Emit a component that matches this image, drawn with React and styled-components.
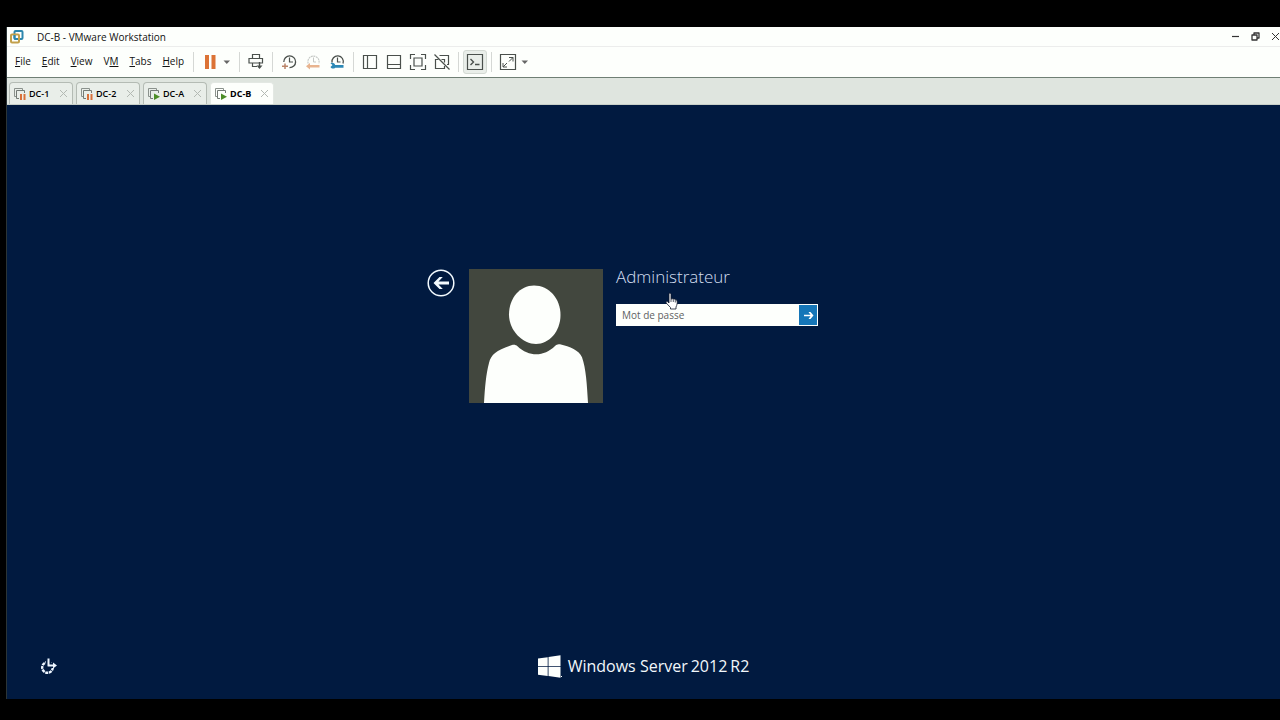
import React from "react";
import styled, { createGlobalStyle, css } from "styled-components";

const GlobalStyle = createGlobalStyle`
  *, *::before, *::after { box-sizing: border-box; }
  html, body { margin: 0; background: #000; }
  body, button, input { font-family: "Open Sans", "Noto Sans", sans-serif; }
  button { border: 0; padding: 0; background: none; color: inherit; cursor: pointer; }
  svg { display: block; flex: none; }
`;

const Desktop = styled.div`
  display: flex;
  min-height: 100vh;
  padding: 27px 0 21px 6px;
  overflow: hidden;
`;

const Window = styled.div`
  display: flex;
  flex-direction: column;
  flex: 1;
  min-width: 0;
  border-left: 1px solid #2b3436;
`;

const TitleBar = styled.header`
  display: flex;
  align-items: center;
  height: 20px;
  padding-left: 2px;
  background: #fdfffc;
  border-bottom: 1px solid #ecedec;
  overflow: hidden;
`;

const Title = styled.h1`
  flex: 1;
  margin: 0 0 0 13px;
  color: #111;
  font-size: 10px;
  font-weight: 400;
  line-height: 18px;
`;

const WindowButton = styled.button`
  display: flex;
  align-items: center;
  justify-content: flex-end;
  flex: none;
  width: 20px;
  height: 18px;
  color: #333;
`;

const Toolbar = styled.div`
  display: flex;
  align-items: center;
  height: 31px;
  background: #fdfffc;
  border-bottom: 1px solid #6f7f74;
`;

const Menu = styled.nav`
  display: flex;
  flex: none;
  gap: 11px;
  width: 182px;
  padding: 0 0 2px 8px;
`;

const MenuItem = styled.button`
  color: #111;
  font-size: 10px;
  line-height: 16px;

  u { text-underline-offset: 1px; }
`;

const Separator = styled.span`
  flex: none;
  width: 1px;
  height: 20px;
  margin: 0 4px;
  background: #d5d8d5;
`;

const ToolButton = styled.button`
  display: flex;
  align-items: center;
  justify-content: center;
  flex: none;
  width: 24px;
  height: 24px;
  color: #4a504c;
  ${(p) => p.$active && css`
    background: #e9eee9;
    border: 1px solid #d3d9d3;
    border-radius: 3px;
  `}
`;

const CaretButton = styled.button`
  display: flex;
  align-items: center;
  flex: none;
  width: 13px;
  height: 24px;
  color: #666;
`;

const TabStrip = styled.div`
  display: flex;
  align-items: flex-end;
  gap: 3px;
  height: 27px;
  padding-left: 2px;
  background: #dfe5df;
  border-bottom: 1px solid #c9d0c9;
`;

const Tab = styled.div`
  display: flex;
  align-items: center;
  flex: none;
  width: 64px;
  height: 22px;
  padding: 0 4px 0 3px;
  background: ${(p) => (p.$active ? "#fdfffc" : "#e9eee9")};
  border: 1px solid ${(p) => (p.$active ? "#e3e8e3" : "#b4bbb4")};
  border-bottom: 0;
  border-radius: 4px 4px 0 0;
`;

const TabLabel = styled.button`
  display: flex;
  align-items: center;
  flex: 1;
  gap: 2px;
  color: #000;
  font-size: 9px;
  font-weight: ${(p) => (p.$active ? 700 : 600)};
  line-height: 16px;
  white-space: nowrap;
`;

const TabClose = styled.button`
  color: #b3b9b3;
`;

const Screen = styled.main`
  display: flex;
  flex-direction: column;
  flex: 1;
  padding: 164px 0 21px;
  background: #011a40;
`;

const Login = styled.form`
  display: grid;
  grid-template-columns: 1fr auto auto 1fr;
  column-gap: 13px;
  align-items: start;
`;

const BackButton = styled.button`
  justify-self: end;
  margin-right: 1px;
  color: #f4fbff;
`;

const Fields = styled.div`
  position: relative;
  width: 202px;
`;

const UserName = styled.h2`
  margin: 0 0 19px;
  color: #d3def0;
  font-size: 17px;
  font-weight: 300;
  line-height: 16px;
`;

const PasswordBox = styled.div`
  display: flex;
  height: 22px;
  padding: 1px;
  background: #fdfffc;
`;

const PasswordInput = styled.input`
  flex: 1;
  min-width: 0;
  padding: 0 5px;
  border: 0;
  outline: 0;
  background: transparent;
  color: #222;
  font-size: 10px;

  &::placeholder { color: #5d6262; opacity: 1; }
`;

const SubmitButton = styled.button`
  display: flex;
  align-items: center;
  justify-content: center;
  width: 18px;
  background: #1576b8;
  color: #fff;
`;

const Pointer = styled.svg`
  position: absolute;
  top: 23px;
  left: 49px;
`;

const ScreenFooter = styled.footer`
  display: grid;
  grid-template-columns: 1fr auto 1fr;
  align-items: center;
  margin-top: auto;
`;

const PowerButton = styled.button`
  justify-self: start;
  margin-left: 33px;
  color: #eef6ff;
`;

const Brand = styled.div`
  display: flex;
  align-items: center;
  gap: 3px;
  color: #f2f7fb;
  font-size: 16px;
  line-height: 24px;
  white-space: nowrap;

  svg { margin-right: 3px; }
`;

const Glyph = ({ size = 18, children }) => (
  <svg width={size} height={size} viewBox={`0 0 ${size} ${size}`} fill="none" stroke="currentColor" aria-hidden="true">
    {children}
  </svg>
);

const AppLogo = () => (
  <svg width="15" height="15" viewBox="0 0 15 15" fill="none" strokeWidth="2" aria-hidden="true">
    <rect x="5.5" y="2" width="8" height="8" rx="1" stroke="#2d87ad" />
    <rect x="2" y="5.5" width="8" height="8" rx="1" stroke="#c2a04a" />
    <path d="M5.5 6V9a1 1 0 0 0 1 1H9" stroke="#2d87ad" />
  </svg>
);

const Caret = () => (
  <svg width="9" height="5" viewBox="0 0 9 5" fill="currentColor" aria-hidden="true">
    <path d="M1.500 .5h6.500L4.800 4z" />
  </svg>
);

const PauseIcon = () => (
  <Glyph>
    <path d="M4 2h4v14H4zM10.500 2h4v14h-4z" fill="#dc7336" stroke="none" />
  </Glyph>
);

const SendKeysIcon = () => (
  <Glyph>
    <path d="M5.500 5.500v-4h7v4M2 5.500h13.500v4.500H2zM5.500 10v3.500h4.500" strokeWidth="1.200" />
    <path d="M12.500 9v5" strokeWidth="1.400" />
    <path d="M9.500 12.500h6L12.500 16z" fill="currentColor" stroke="none" />
  </Glyph>
);

const SnapshotIcon = () => (
  <Glyph>
    <path d="M3.800 9a5.900 5.900 0 1 1 5.700 5.700" strokeWidth="1.300" />
    <path d="M9.500 4.500V9H13" strokeWidth="1.200" />
    <path d="M5 10.500v5.500M2 13.300h6" stroke="#b98468" strokeWidth="1.500" />
  </Glyph>
);

const RevertIcon = () => (
  <Glyph>
    <path d="M4.200 10.500a5.600 5.600 0 1 1 10.600 0" stroke="#c5c8c5" strokeWidth="1.100" strokeDasharray="2 .6" />
    <path d="M9.500 4.500V9H12" stroke="#c5c8c5" />
    <path d="M2 13.200l4-3.200v2h9.500v2.500H6v2z" fill="#e8b48f" stroke="none" />
  </Glyph>
);

const ManageIcon = () => (
  <Glyph>
    <path d="M4 9.500a5.700 5.700 0 1 1 11 1" strokeWidth="1.300" />
    <path d="M9.500 4.500V9H12.500" strokeWidth="1.200" />
    <path d="M2.500 10.300l2 1.700-2 2c1 2 3.500 2 4.700.7H15.500V12H7.200C6.500 9.800 4 9.300 2.500 10.300z" fill="#2c88b5" stroke="none" />
  </Glyph>
);

const SidebarIcon = () => (
  <Glyph>
    <path d="M2.500 2.500h13v13h-13zM6.500 2.500v13" strokeWidth="1.200" />
  </Glyph>
);

const ThumbnailIcon = () => (
  <Glyph>
    <path d="M2.500 2.500h13v13h-13zM2.500 11.500h13" strokeWidth="1.200" />
  </Glyph>
);

const FullScreenIcon = () => (
  <Glyph>
    <path d="M6 1.500H1.500V6M12 1.500h4.500V6M1.500 12v4.500H6M16.500 12v4.500H12M5 5h8v8H5z" strokeWidth="1.200" />
  </Glyph>
);

const UnityIcon = () => (
  <Glyph>
    <path d="M6.500 2.500h9v9H14M5.500 6.500h-3v9h9V13M11.500 9.500V6.500H8.500" strokeWidth="1.200" />
    <path d="M1.500 1.500l15 15" strokeWidth="1.200" />
  </Glyph>
);

const ConsoleIcon = () => (
  <Glyph>
    <path d="M1.500 1.500h15v15h-15z" strokeWidth="1.200" />
    <path d="M4.500 6l3 3-3 3M9 11.500h4.500" strokeWidth="1.400" />
  </Glyph>
);

const StretchIcon = () => (
  <Glyph>
    <path d="M1.500 1.500h15v15h-15z" strokeWidth="1.200" />
    <path d="M10 4.500h4v4M14 4.500l-4 4M8 10l-4 4M4 10v4h4" />
  </Glyph>
);

const MachineIcon = ({ state }) => (
  <Glyph size={14}>
    <path d="M3 9.500H1.500v-8h8V3" stroke="#8b928d" />
    <path d="M6 11.500H3.500v-8h8V6" stroke="#737a75" />
    {state === "paused" ? (
      <path d="M7 7h2v6H7zM10.500 7h2v6h-2z" fill="#d9713b" stroke="none" />
    ) : (
      <path d="M7 6.500v6.500L13 9.800z" fill="#4c8d27" stroke="none" />
    )}
  </Glyph>
);

const CrossIcon = ({ size = 9 }) => (
  <Glyph size={size}>
    <path d={`M1 1L${size - 1} ${size - 1}M${size - 1} 1L1 ${size - 1}`} />
  </Glyph>
);

const BackIcon = () => (
  <Glyph size={28}>
    <circle cx="14" cy="14" r="12.800" strokeWidth="1.500" />
    <path d="M6.500 14l6-6h3.300l-4.300 4.600H22v2.800H11.500l4.300 4.600h-3.300z" fill="currentColor" stroke="none" />
  </Glyph>
);

const Avatar = () => (
  <svg width="134" height="134" viewBox="0 0 134 134" role="img" aria-label="Administrateur">
    <path d="M0 0h134v134H0z" fill="#42473e" />
    <path d="M65 16.500c15 0 26.500 13 26.500 29.500S80 75 67 75 40 62 40 45.500 51 16.500 65 16.500z" fill="#fdfffc" />
    <path d="M15 134c1-16 2-29 5-40 2-9 8-13 23-18 2-.7 4-.3 5.500 1.200C60 88 75 88 86 77c1.500-1.500 3-2.200 5-1.700 10 2.200 19 6 22 13 4 11 5 28 6 45.700z" fill="#fdfffc" />
  </svg>
);

const ArrowIcon = () => (
  <Glyph size={11}>
    <path d="M1 5.500h7" strokeWidth="1.500" />
    <path d="M5.500 2h2L10.500 5.500 7.500 9h-2l2.500-3.500z" fill="currentColor" stroke="none" />
  </Glyph>
);

const PowerIcon = () => (
  <Glyph size={18}>
    <circle cx="7.500" cy="10.500" r="5.300" strokeWidth="2.400" strokeDasharray="3 .7" />
    <path d="M6 0h5.500v8.500H6zM9 6h7v5H9z" fill="#011a40" stroke="none" />
    <path d="M8.500 1.500V9.200M7.700 8.500H15" strokeWidth="2" />
    <path d="M13 5.500l4 3-4 3z" fill="currentColor" stroke="none" />
  </Glyph>
);

const WindowsLogo = () => (
  <svg width="24" height="23" viewBox="0 0 24 23" fill="#fdfffc" aria-hidden="true">
    <path d="M0 3.500L9.700 2.200v9H0zM10.500 2L22.500 .3v10.900h-12zM0 12h9.700v9L0 19.700zM10.500 12h12v10.700l-12-1.600z" />
    <path d="M23 21h1v1h-1z" />
  </svg>
);

const menus = [
  ["", "F", "ile"],
  ["", "E", "dit"],
  ["", "V", "iew"],
  ["V", "M", ""],
  ["", "T", "abs"],
  ["", "H", "elp"],
];

const machines = [
  { name: "DC-1", state: "paused" },
  { name: "DC-2", state: "paused" },
  { name: "DC-A", state: "running" },
  { name: "DC-B", state: "running", active: true },
];

const toolGroups = [
  [["Send Ctrl+Alt+Del", SendKeysIcon]],
  [["Take snapshot", SnapshotIcon], ["Revert snapshot", RevertIcon], ["Manage snapshots", ManageIcon]],
  [["Show library", SidebarIcon], ["Show thumbnail bar", ThumbnailIcon], ["Full screen", FullScreenIcon], ["Unity", UnityIcon]],
  [["Console view", ConsoleIcon, true]],
  [["Stretch guest", StretchIcon]],
];

export default function App() {
  return (
    <>
      <GlobalStyle />
      <Desktop>
        <Window>
          <TitleBar>
            <AppLogo />
            <Title>DC-B - VMware Workstation</Title>
            <WindowButton aria-label="Minimize">
              <Glyph size={9}><path d="M1 4.500h7" strokeWidth="1.200" /></Glyph>
            </WindowButton>
            <WindowButton aria-label="Restore">
              <Glyph size={9}>
                <path d="M1 3h5v5H1zM3 3V1h5v5H6" strokeWidth="1.300" strokeLinejoin="round" />
              </Glyph>
            </WindowButton>
            <WindowButton aria-label="Close"><CrossIcon /></WindowButton>
          </TitleBar>

          <Toolbar>
            <Menu aria-label="Main menu">
              {menus.map(([before, key, after]) => (
                <MenuItem key={before + key + after}>{before}<u>{key}</u>{after}</MenuItem>
              ))}
            </Menu>
            <Separator />
            <ToolButton aria-label="Suspend"><PauseIcon /></ToolButton>
            <CaretButton aria-label="Power options"><Caret /></CaretButton>
            {toolGroups.map((group) => (
              <React.Fragment key={group[0][0]}>
                <Separator />
                {group.map(([label, Icon, active]) => (
                  <ToolButton key={label} aria-label={label} $active={active}><Icon /></ToolButton>
                ))}
              </React.Fragment>
            ))}
            <CaretButton aria-label="Stretch options"><Caret /></CaretButton>
          </Toolbar>

          <TabStrip>
            {machines.map(({ name, state, active }) => (
              <Tab key={name} $active={active}>
                <TabLabel $active={active}><MachineIcon state={state} />{name}</TabLabel>
                <TabClose aria-label={`Close ${name}`}><CrossIcon /></TabClose>
              </Tab>
            ))}
          </TabStrip>

          <Screen>
            <Login onSubmit={(e) => e.preventDefault()}>
              <BackButton type="button" aria-label="Retour"><BackIcon /></BackButton>
              <Avatar />
              <Fields>
                <UserName>Administrateur</UserName>
                <PasswordBox>
                  <PasswordInput type="password" placeholder="Mot de passe" aria-label="Mot de passe" />
                  <SubmitButton type="submit" aria-label="Envoyer"><ArrowIcon /></SubmitButton>
                </PasswordBox>
                <Pointer width="14" height="18" viewBox="0 0 14 18" aria-hidden="true">
                  <path
                    d="M4 1.500c1-.8 2 0 2 1V7c2-.6 5 .3 6 1.500.6 2.500 0 4.500-1 6.500v2H5.500v-1.500L1.200 11c-.6-1.200.8-1.800 1.600-1.200L4 11z"
                    fill="#fff"
                    stroke="#10182a"
                    strokeWidth=".8"
                  />
                  <path d="M6 7v3M8.300 7.300V10M10.300 8v2.500" stroke="#10182a" strokeWidth=".7" />
                </Pointer>
              </Fields>
            </Login>
            <ScreenFooter>
              <PowerButton aria-label="Options d'alimentation"><PowerIcon /></PowerButton>
              <Brand>
                <WindowsLogo />
                <span>Windows Server</span>
                <span>2012</span>
                <span>R2</span>
              </Brand>
            </ScreenFooter>
          </Screen>
        </Window>
      </Desktop>
    </>
  );
}
